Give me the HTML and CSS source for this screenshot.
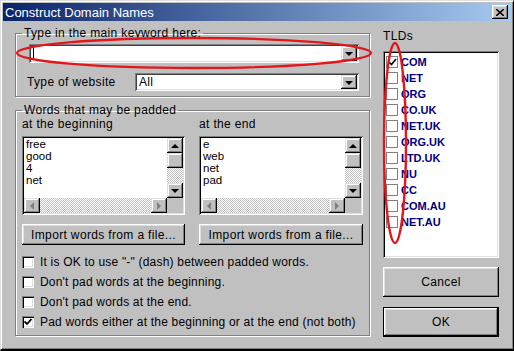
FILE: index.html
```html
<!DOCTYPE html>
<html lang="en">
<head>
    <meta charset="UTF-8">
    <title>Construct Domain Names</title>
    <link rel="stylesheet" href="styles.css">
</head>
<body>
    <div class="window">
        <div class="titlebar">
            <span class="title">Construct Domain Names</span>
            <span class="close">
                <svg width="8" height="7" viewBox="0 0 8 7"><path d="M0 0 L8 7 M8 0 L0 7" stroke="#000" stroke-width="1.6"/></svg>
            </span>
        </div>

        <div class="main">
            <div class="left">
                <fieldset class="group keyword-group">
                    <legend>Type in the main keyword here:</legend>
                    <div class="combo keyword">
                        <span class="combo-text"><span class="caret"></span></span>
                        <span class="drop"><span class="tri-down"></span></span>
                    </div>
                    <div class="site-row">
                        <span class="site-label">Type of website</span>
                        <div class="combo site">
                            <span class="combo-text">All</span>
                            <span class="drop"><span class="tri-down"></span></span>
                        </div>
                    </div>
                </fieldset>

                <fieldset class="group pad-group">
                    <legend>Words that may be padded</legend>
                    <div class="lists">
                        <div class="col">
                            <div class="col-label">at the beginning</div>
                            <div class="listbox">
                                <div class="items">free<br>good<br>4<br>net</div>
                                <div class="vscroll">
                                    <span class="sbtn"><span class="tri-up"></span></span>
                                    <span class="sbtn"></span>
                                    <span class="track"></span>
                                    <span class="sbtn"><span class="tri-down"></span></span>
                                </div>
                                <div class="hscroll">
                                    <span class="sbtn"><span class="tri-left"></span></span>
                                    <span class="track"></span>
                                    <span class="sbtn"><span class="tri-right"></span></span>
                                </div>
                                <div class="corner"></div>
                            </div>
                            <button class="btn import">Import words from a file...</button>
                        </div>
                        <div class="col">
                            <div class="col-label">at the end</div>
                            <div class="listbox">
                                <div class="items">e<br>web<br>net<br>pad</div>
                                <div class="vscroll">
                                    <span class="sbtn"><span class="tri-up"></span></span>
                                    <span class="sbtn"></span>
                                    <span class="track"></span>
                                    <span class="sbtn"><span class="tri-down"></span></span>
                                </div>
                                <div class="hscroll">
                                    <span class="sbtn"><span class="tri-left"></span></span>
                                    <span class="track"></span>
                                    <span class="sbtn"><span class="tri-right"></span></span>
                                </div>
                                <div class="corner"></div>
                            </div>
                            <button class="btn import">Import words from a file...</button>
                        </div>
                    </div>

                    <div class="options">
                        <div class="option"><span class="check"></span>It is OK to use "-" (dash) between padded words.</div>
                        <div class="option"><span class="check"></span>Don't pad words at the beginning.</div>
                        <div class="option"><span class="check"></span>Don't pad words at the end.</div>
                        <div class="option"><span class="check checked"><svg width="8" height="8" viewBox="0 0 8 8"><path d="M0.5 3.5 L3 6 L7.5 1" stroke="#000" stroke-width="1.8" fill="none"/></svg></span>Pad words either at the beginning or at the end (not both)</div>
                    </div>
                </fieldset>
            </div>

            <div class="right">
                <div class="tld-label">TLDs</div>
                <div class="tld-list">
                    <div class="tld"><span class="tbox"><svg width="9" height="8" viewBox="0 0 9 8"><path d="M1 4 L3.5 6.5 L8 1" stroke="#000" stroke-width="1.6" fill="none"/></svg></span>COM</div>
                    <div class="tld"><span class="tbox"></span>NET</div>
                    <div class="tld"><span class="tbox"></span>ORG</div>
                    <div class="tld"><span class="tbox"></span>CO.UK</div>
                    <div class="tld"><span class="tbox"></span>NET.UK</div>
                    <div class="tld"><span class="tbox"></span>ORG.UK</div>
                    <div class="tld"><span class="tbox"></span>LTD.UK</div>
                    <div class="tld"><span class="tbox"></span>NU</div>
                    <div class="tld"><span class="tbox"></span>CC</div>
                    <div class="tld"><span class="tbox"></span>COM.AU</div>
                    <div class="tld"><span class="tbox"></span>NET.AU</div>
                </div>
                <button class="btn big cancel">Cancel</button>
                <button class="btn big ok">OK</button>
            </div>
        </div>

        <!-- red marker circles drawn over the dialog -->
        <svg class="marks" width="514" height="351" viewBox="0 0 514 351">
            <ellipse cx="194" cy="53" rx="177" ry="15" fill="none" stroke="#e3161c" stroke-width="2.4"/>
            <ellipse cx="395" cy="143" rx="11" ry="100" fill="none" stroke="#e3161c" stroke-width="2.4"/>
        </svg>
    </div>
</body>
</html>
```

FILE: styles.css
```css
* {
    box-sizing: border-box;
}
body {
    margin: 0;
    background: #000;
    font-family: "Liberation Sans", Arial, sans-serif;
    font-size: 12px;
    color: #000;
}
.window {
    position: relative;
    width: 514px;
    height: 351px;
    padding: 2px;
    background: #c0c0c0;
    border-top: 1px solid #dfdfdf;
    border-left: 1px solid #dfdfdf;
    border-right: 1px solid #000;
    border-bottom: 2px solid #000;
    box-shadow: inset 1px 1px #fff, inset -1px -1px #808080;
}
.titlebar {
    height: 18px;
    display: flex;
    align-items: center;
    justify-content: space-between;
    padding: 0 3px 0 2px;
    background: linear-gradient(to right, #0a246a, #a6caf0);
}
.title {
    color: #fff;
    font-size: 13px;
}
.close {
    width: 16px;
    height: 14px;
    display: flex;
    align-items: center;
    justify-content: center;
    background: #c0c0c0;
    box-shadow: inset -1px -1px #000, inset 1px 1px #fff, inset -2px -2px #808080, inset 2px 2px #dfdfdf;
}

.main {
    display: flex;
    gap: 13px;
    padding: 0 12px;
}
.left {
    width: 355px;
}
.right {
    width: 116px;
    display: flex;
    flex-direction: column;
}

/* group boxes */
.group {
    margin: 0;
    padding: 0 6px;
    border: 1px solid #808080;
    box-shadow: inset 1px 1px #fff, 1px 1px #fff;
    letter-spacing: 0.35px;
}
.group legend {
    padding: 0 2px;
    line-height: 14px;
}
.keyword-group {
    margin-top: 5px;
    padding-bottom: 5px;
}
.pad-group {
    margin-top: 6px;
    padding-bottom: 3px;
}

/* combo boxes */
.combo {
    display: flex;
    background: #fff;
    padding: 2px;
    box-shadow: inset 1px 1px #808080, inset -1px -1px #fff, inset 2px 2px #404040, inset -2px -2px #dfdfdf;
}
.combo-text {
    flex: 1;
    padding-left: 2px;
    line-height: 14px;
}
.keyword {
    height: 19px;
    margin: 4px 4px 0 7px;
}
.caret {
    display: inline-block;
    width: 1px;
    height: 13px;
    margin-top: 1px;
    background: #000;
}
.drop {
    width: 16px;
    display: flex;
    align-items: center;
    justify-content: center;
    background: #c0c0c0;
    box-shadow: inset -1px -1px #000, inset 1px 1px #dfdfdf, inset -2px -2px #808080, inset 2px 2px #fff;
}
.site-row {
    display: flex;
    align-items: center;
    margin: 10px 4px 0 5px;
}
.site-label {
    width: 108px;
}
.site {
    flex: 1;
    height: 18px;
}

/* triangles */
.tri-down, .tri-up, .tri-left, .tri-right {
    width: 0;
    height: 0;
    border: 4px solid transparent;
}
.tri-down {
    border-top-color: #000;
    border-bottom-width: 0;
    margin-top: 1px;
}
.tri-up {
    border-bottom-color: #000;
    border-top-width: 0;
}
.tri-left {
    border-right-color: #808080;
    border-left-width: 0;
}
.tri-right {
    border-left-color: #808080;
    border-right-width: 0;
}

/* word lists */
.lists {
    display: grid;
    grid-template-columns: 163px 164px;
    column-gap: 14px;
}
.col-label {
    line-height: 14px;
}
.listbox {
    margin-top: 5px;
    height: 79px;
    padding: 2px;
    background: #fff;
    box-shadow: inset 1px 1px #808080, inset -1px -1px #fff, inset 2px 2px #000, inset -2px -2px #dfdfdf;
    display: grid;
    grid-template-columns: 1fr 16px;
    grid-template-rows: 60px 15px;
    letter-spacing: 0;
}
.items {
    padding-left: 2px;
    line-height: 12px;
    font-size: 11.5px;
}
.vscroll {
    display: grid;
    grid-template-rows: 15px 15px 1fr 15px;
}
.hscroll {
    display: grid;
    grid-template-columns: 16px 1fr 16px;
}
.sbtn {
    display: flex;
    align-items: center;
    justify-content: center;
    background: #c0c0c0;
    box-shadow: inset -1px -1px #000, inset 1px 1px #dfdfdf, inset -2px -2px #808080, inset 2px 2px #fff;
}
.track {
    background: repeating-conic-gradient(#c0c0c0 0 25%, #fff 0 50%) 0 0 / 2px 2px;
}
.corner {
    background: #c0c0c0;
}

/* buttons */
.btn {
    display: block;
    width: 100%;
    padding: 0;
    border: none;
    background: #c0c0c0;
    font: inherit;
    letter-spacing: 0.35px;
    color: #000;
    box-shadow: inset -1px -1px #000, inset 1px 1px #fff, inset -2px -2px #808080, inset 2px 2px #dfdfdf;
}
.import {
    height: 21px;
    margin-top: 9px;
}

/* check options */
.options {
    margin-top: 7px;
}
.option {
    height: 20px;
    display: flex;
    align-items: center;
    gap: 6px;
    white-space: nowrap;
    letter-spacing: 0.2px;
}
.check {
    flex: none;
    width: 12px;
    height: 12px;
    display: flex;
    align-items: center;
    justify-content: center;
    background: #fff;
    box-shadow: inset 1px 1px #808080, inset 2px 2px #000, inset -1px -1px #fff, inset -2px -2px #dfdfdf;
}

/* TLD column */
.tld-label {
    margin-top: 8px;
    line-height: 14px;
    letter-spacing: 0.35px;
}
.tld-list {
    margin-top: 8px;
    height: 207px;
    padding: 3px 2px 2px 3px;
    background: #fff;
    box-shadow: inset 1px 1px #808080, inset -1px -1px #fff, inset 2px 2px #000, inset -2px -2px #dfdfdf;
}
.tld {
    height: 16px;
    display: flex;
    align-items: center;
    gap: 3px;
    color: #000080;
    font-size: 11px;
    font-weight: bold;
}
.tbox {
    width: 12px;
    height: 12px;
    display: flex;
    align-items: center;
    justify-content: center;
    border: 1px solid #808080;
    background: #fff;
}
.big {
    height: 30px;
}
.cancel {
    margin-top: 9px;
}
.ok {
    margin-top: 10px;
    border: 1px solid #000;
}

.marks {
    position: absolute;
    left: -1px;
    top: -1px;
    pointer-events: none;
}
```
